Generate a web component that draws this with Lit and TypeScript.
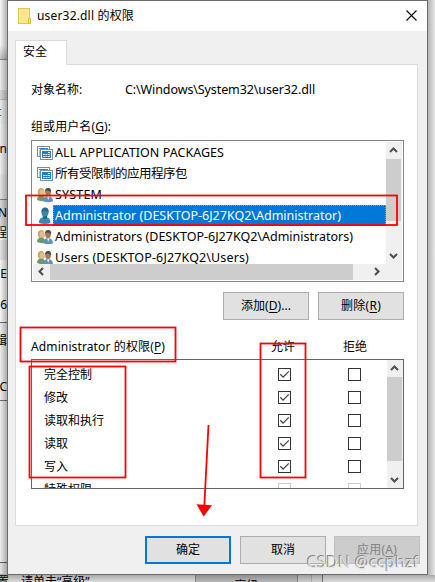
import { LitElement, html, svg, css } from "lit";
import { customElement, property, state } from "lit/decorators.js";
import { classMap } from "lit/directives/class-map.js";
import { styleMap } from "lit/directives/style-map.js";

/** A single line of text whose tracking is adjusted to fill a given width. */
@customElement("text-run")
class TextRun extends LitElement {
  static styles = css`
    :host { display: inline-block; white-space: pre; flex: none; }
    .run { display: inline-block; }
    ::slotted(u) { text-decoration: underline; text-underline-offset: 2px; }
  `;
  @property({ type: Number }) width = 0;
  @state() private spacing = 0;

  firstUpdated() {
    const run = this.renderRoot.querySelector(".run") as HTMLElement;
    const count = (this.textContent || "").length;
    const natural = run.getBoundingClientRect().width;
    if (this.width && count) this.spacing = (this.width - natural) / count;
  }
  render() {
    return html`<span class="run" style=${styleMap({ letterSpacing: this.spacing + "px" })}><slot></slot></span>`;
  }
}

@customElement("push-button")
class PushButton extends LitElement {
  static styles = css`
    :host { display: block; flex: none; width: 86px; height: 28px; }
    .btn {
      box-sizing: border-box; width: 100%; height: 100%;
      display: flex; align-items: center; justify-content: center;
      background: #e1e1e1; border: 1px solid #adadad;
    }
    .default { border: 2px solid #0078d7; }
    .disabled { background: #cccccc; border-color: #bfbfbf; color: #838383; }
  `;
  @property() kind = "";
  render() {
    return html`<div class=${classMap({ btn: true, default: this.kind === "default", disabled: this.kind === "disabled" })}>
      <slot></slot>
    </div>`;
  }
}

@customElement("check-box")
class CheckBox extends LitElement {
  static styles = css`
    :host { display: block; flex: none; width: 13px; height: 13px; }
    svg { display: block; }
  `;
  @property({ type: Boolean }) checked = false;
  @property({ type: Boolean }) dim = false;
  render() {
    return html`<svg width="13" height="13">
      <rect x=".5" y=".5" width="12" height="12" fill="#fff" stroke=${this.dim ? "#ccc" : "#333"}></rect>
      ${this.checked ? svg`<path d="M2.3 6.3 L5.1 9.1 L10.8 3.4" fill="none" stroke="#444" stroke-width="1.3"></path>` : ""}
    </svg>`;
  }
}

const chevrons: Record<string, string> = {
  up: "M4 10 L7.5 6.5 L11 10",
  down: "M4 6 L7.5 9.5 L11 6",
  left: "M10 4 L6.5 7.5 L10 11",
  right: "M5 4 L8.5 7.5 L5 11",
};
const chevron = (dir: string) => html`<svg class="chev" width="15" height="16">
  <path d=${chevrons[dir]} fill="none" stroke="#505050" stroke-width="2.1"></path>
</svg>`;

const packageIcon = html`<svg class="icon" width="16" height="16">
  <rect x=".5" y="1.5" width="12" height="10" fill="#fff" stroke="#7f8a93"></rect>
  <path d="M2 3.5H11M2 6H4M2 8H4M2 10H4" stroke="#2b88d8"></path>
  <rect x="3.5" y="4.5" width="12" height="10" fill="#fff" stroke="#7f8a93"></rect>
  <rect x="5" y="6" width="9" height="7" fill="#1a80d6"></rect>
  <path d="M6 9.5H8M8.5 9.5H10.5M11 9.5H13M6 11.5H8M8.5 11.5H10.5M11 11.5H13" stroke="#d8ecfb"></path>
  <path d="M11 7.5H13" stroke="#fff"></path>
</svg>`;

const groupIcon = html`<svg class="icon" width="16" height="16">
  <path d="M0 13 Q0 8.5 4.5 8.5 Q8 8.5 8.5 13.5 Q4 15 0 13Z" fill="#6b9a68"></path>
  <path d="M1 7 Q0 1 4.3 1 Q8 1 7.6 7.5 L6 9 H2.5Z" fill="#c9a85a"></path>
  <ellipse cx="4.8" cy="5.4" rx="2.1" ry="3" fill="#e4bd96"></ellipse>
  <path d="M6.5 14.5 Q6.5 9 11 9 Q15.8 9 16 14.5 Q11 16 6.5 14.5Z" fill="#5e93bd"></path>
  <path d="M10 9 L11.2 13 L12.6 9Z" fill="#eef4f8"></path>
  <ellipse cx="11" cy="5.6" rx="2.8" ry="3.8" fill="#a87955"></ellipse>
  <path d="M8 5 Q7.8 1 11.2 1 Q14.8 1 14 5.8 Q13 3.6 10.5 3.6 Q9 3.6 8 5Z" fill="#3f4c52"></path>
</svg>`;

const userIcon = html`<svg class="icon" width="16" height="18">
  <path d="M2 16 Q1.5 10 8 10 Q13.8 10 13.5 16 Q8 18 2 16Z" fill="#3388b4"></path>
  <path d="M5.8 8 H10 V10.5 L8 12.5 L5.8 10.5Z" fill="#1b607f"></path>
  <ellipse cx="8" cy="5" rx="3.6" ry="4.5" fill="#3489a9"></ellipse>
  <path d="M4.5 5 Q4.5 .8 8.5 .8 Q12 1 11.5 5 Q8.5 2.8 4.5 5Z" fill="#2a6a87"></path>
</svg>`;

const principals = [
  { icon: packageIcon, name: "ALL APPLICATION PACKAGES", width: 169 },
  { icon: packageIcon, name: "所有受限制的应用程序包", width: 132 },
  { icon: groupIcon, name: "SYSTEM", width: 47 },
  { icon: userIcon, name: "Administrator (DESKTOP-6J27KQ2\\Administrator)", width: 286, selected: true },
  { icon: groupIcon, name: "Administrators (DESKTOP-6J27KQ2\\Administrators)", width: 298 },
  { icon: groupIcon, name: "Users (DESKTOP-6J27KQ2\\Users)", width: 194 },
];

const permissions = [
  { name: "完全控制", allow: true },
  { name: "修改", allow: true },
  { name: "读取和执行", allow: true },
  { name: "读取", allow: true },
  { name: "写入", allow: true },
  { name: "特殊权限", allow: false, dim: true },
];

@customElement("app-root")
class AppRoot extends LitElement {
  static styles = css`
    :host {
      display: block; position: relative; width: 435px; height: 582px; overflow: hidden;
      font: 12px/16px "Noto Sans", "Noto Sans CJK SC", sans-serif; color: #000;
      background: #ebebeb;
    }
    * { box-sizing: border-box; }
    .latin { font-size: 12.5px; }

    .behind { position: absolute; inset: 0; }
    .strip { width: 7px; height: 100%; display: flex; flex-direction: column; overflow: hidden; }
    .strip div { flex: none; width: 7px; overflow: hidden; white-space: nowrap; display: flex; justify-content: flex-end; align-items: center; }
    .s1 { height: 60px; border-bottom: 1px solid #8c8c8c; background: linear-gradient(#fff 0 45px, #c8c8c8); }
    .s2 { height: 30px; background: #f2f2f2; }
    .s3 { height: 10px; background: #dcdcdc; border-bottom: 1px solid #bdbdbd; }
    .strip .s4 { height: 24px; background: #f2f2f2; color: #1669b5; justify-content: flex-start; text-indent: -3px; }
    .s5 { height: 50px; background: #f6f6f6; }
    .s6 { height: 27px; margin-top: 25px; border-top: 1px solid #82828e; background: #dedede; }
    .s7 { height: 14px; background: #fff; }
    .s8 { height: 28px; margin-top: 20px; background: #fff; }
    .s9 { height: 35px; background: #fff; border-bottom: 1px solid #707078; }
    .s10 { height: 36px; background: #f4f4f4; }
    .s11 { height: 42px; padding-top: 14px; background: #f6f6f6; border-bottom: 1px solid #777; }
    .s12 { height: 162px; background: #f6f6f6; border-bottom: 1px solid #666; }
    .strip .s13 { flex: 1; background: #ececec; }
    .veil { position: absolute; left: 0; top: 0; width: 7px; height: 100%; background: linear-gradient(90deg, rgba(0,0,0,.03), rgba(0,0,0,.3)); }
    .below { position: absolute; left: 0; right: 0; top: 574px; height: 8px; overflow: hidden; display: flex; background: #e8e8e8; }
    .note { width: 195px; }
    .note text-run { margin: -1px 0 0 -3px; }
    .other { width: 103px; background: #c2c2c2; border: solid #8e8e8e; border-width: 0 1px; text-align: center; padding-top: 4px; }
    .gap { width: 14px; background: #d8d8d8; border-right: 1px solid #bbb; }
    .edge { width: 11px; background: #dcdcdc; border-right: 1px solid #777; }
    .shade { position: absolute; left: 0; right: 0; top: 574px; height: 8px; background: linear-gradient(rgba(0,0,0,.3), rgba(0,0,0,.05)); }
    .side { position: absolute; left: 428px; top: 0; width: 7px; height: 575px; background: linear-gradient(90deg, #b4b4b4, #e6e6e6); }

    .window {
      position: absolute; left: 7px; top: 0; width: 421px; height: 575px;
      background: #f0f0f0; border: 1px solid #6b6b6b; display: flex; flex-direction: column;
    }
    .title { height: 30px; flex: none; background: #fff; display: flex; align-items: center; padding: 0 10px 0 9px; }
    .title text-run { margin-left: 6px; }
    .title .close { margin: 0 0 2px auto; }
    .title svg { display: block; margin-bottom: 1px; }
    .tabs { height: 34px; padding: 9px 0 0 7px; flex: none; position: relative; z-index: 1; }
    .tab { width: 52px; height: 25px; background: #fff; border: 1px solid #dcdcdc; border-bottom: 0; padding: 3px 0 0 7px; }
    .panel { margin: -1px 0 0 7px; width: 403px; height: 462px; flex: none; background: #fff; border: 1px solid #dcdcdc; padding: 0 14px 0 15px; }
    .object { height: 33px; margin-top: 8px; display: flex; align-items: center; }
    .object .key { width: 94px; }
    .caption { height: 16px; margin-top: 13px; display: flex; align-items: center; }

    .list { width: 373px; height: 142px; margin-top: 5px; border: 1px solid #828790; display: grid; grid-template: 122px 16px / 353px 16px; padding: 1px; background: #fff; }
    .rows { overflow: hidden; }
    .row { height: 21px; display: flex; align-items: center; padding-left: 4px; }
    .icon { display: block; flex: none; }
    .name { height: 21px; display: flex; align-items: center; padding-left: 2px; flex: 1; }
    .selected .name { background: #0078d7; color: #fff; outline: 1px dotted #d8893a; outline-offset: -1px; }
    .vbar, .hbar { background: #f0f0f0; display: flex; }
    .vbar { flex-direction: column; justify-content: space-between; }
    .vbar .thumb { width: 15px; height: 62px; margin: 1px 0 auto; background: #cdcdcd; }
    .hbar { grid-column: span 2; }
    .hbar .thumb { width: 303px; margin-left: 2px; margin-right: 17px; background: #cdcdcd; }
    .chev { display: block; flex: none; }

    .actions { margin-top: 10px; display: flex; justify-content: flex-end; gap: 9px; width: 373px; }
    .heads { height: 16px; margin-top: 19px; display: flex; align-items: center; }
    .heads .who { width: 240px; }
    .heads .allow { width: 72px; }
    .perms { width: 373px; height: 130px; margin-top: 4px; border: 1px solid #646464; display: flex; background: #fff; overflow: hidden; }
    .plist { width: 355px; padding: 3px 0 0 12px; }
    .perm { height: 23px; display: grid; grid-template-columns: 234px 70px 13px; align-items: center; }
    .perms .vbar { width: 16px; }
    .perms .vbar .thumb { height: 84px; }
    .footer { display: flex; margin: 10px 0 0 137px; }
    .footer .cancel { margin-left: 9px; }
    .footer .apply { margin-left: 8px; }

    .marks { position: absolute; left: 0; top: 0; }
    .credit { position: absolute; left: 307px; top: 552px; font-size: 16px; line-height: 20px; color: rgba(225,225,225,.95); text-shadow: -1px -1px 0 #858585; }
  `;

  render() {
    return html`
      <div class="behind">
        <div class="strip">
          <div class="s1"></div><div class="s2"></div><div class="s3"></div>
          <div class="s4">t</div><div class="s5">in</div><div class="s6">N</div>
          <div class="s7">程</div><div class="s8">DE</div><div class="s9">-6</div>
          <div class="s10">辑</div><div class="s11">C</div><div class="s12"></div><div class="s13"></div>
        </div>
        <div class="veil"></div>
        <div class="below">
          <div class="note"><text-run>置，请单击“高级”</text-run></div>
          <div class="other">高级</div><div class="gap"></div><div class="edge"></div>
        </div>
        <div class="shade"></div>
        <div class="side"></div>
      </div>

      <div class="window">
        <div class="title">
          <svg width="14" height="18">
            <rect x="1.5" y="1.5" width="11" height="15" fill="#ffe58f" stroke="#e6c34d"></rect>
            <path d="M11.5 16.5V11.5Q13.5 9.5 13.5 12V16.5Z" fill="#ffe58f" stroke="#dfb736"></path>
          </svg>
          <text-run width="97">user32.dll 的权限</text-run>
          <svg class="close" width="11" height="11">
            <path d="M.5 .5L10.5 10.5M10.5 .5L.5 10.5" stroke="#000" stroke-width="1.1"></path>
          </svg>
        </div>
        <div class="tabs"><div class="tab">安全</div></div>
        <div class="panel">
          <div class="object">
            <span class="key">对象名称:</span>
            <text-run class="latin" width="190">C:\\Windows\\System32\\user32.dll</text-run>
          </div>
          <div class="caption"><text-run width="80">组或用户名(<u>G</u>):</text-run></div>
          <div class="list">
            <div class="rows">
              ${principals.map((p) => html`<div class=${classMap({ row: true, selected: !!p.selected })}>
                ${p.icon}<span class="name"><text-run class="latin" width=${p.width}>${p.name}</text-run></span>
              </div>`)}
            </div>
            <div class="vbar">${chevron("up")}<div class="thumb"></div>${chevron("down")}</div>
            <div class="hbar">${chevron("left")}<div class="thumb"></div>${chevron("right")}</div>
          </div>
          <div class="actions">
            <push-button><text-run width="50">添加(<u>D</u>)...</text-run></push-button>
            <push-button><text-run width="40">删除(<u>R</u>)</text-run></push-button>
          </div>
          <div class="heads">
            <span class="who"><text-run width="134">Administrator 的权限(<u>P</u>)</text-run></span>
            <span class="allow">允许</span><span>拒绝</span>
          </div>
          <div class="perms">
            <div class="plist">
              ${permissions.map((p) => html`<div class="perm">
                <span>${p.name}</span>
                <check-box ?checked=${p.allow} ?dim=${p.dim}></check-box>
                <check-box ?dim=${p.dim}></check-box>
              </div>`)}
            </div>
            <div class="vbar">${chevron("up")}<div class="thumb"></div>${chevron("down")}</div>
          </div>
        </div>
        <div class="footer">
          <push-button kind="default">确定</push-button>
          <push-button class="cancel">取消</push-button>
          <push-button class="apply" kind="disabled"><text-run width="40">应用(<u>A</u>)</text-run></push-button>
        </div>
      </div>

      <svg class="marks" width="435" height="582" fill="none" stroke="#ff0000" stroke-width="1.8">
        <rect x="26" y="195.5" width="371" height="29.5"></rect>
        <rect x="20.5" y="327.5" width="155" height="34"></rect>
        <rect x="29.5" y="366.5" width="96" height="111"></rect>
        <rect x="260.5" y="343.5" width="45" height="134"></rect>
        <path d="M208.5 425L204.3 506"></path>
        <path d="M196.5 504.3L212 505.3L203.6 516.5Z" fill="#ff0000" stroke="none"></path>
      </svg>
      <div class="credit"><text-run width="112">CSDN @ccphzf</text-run></div>
    `;
  }
}
